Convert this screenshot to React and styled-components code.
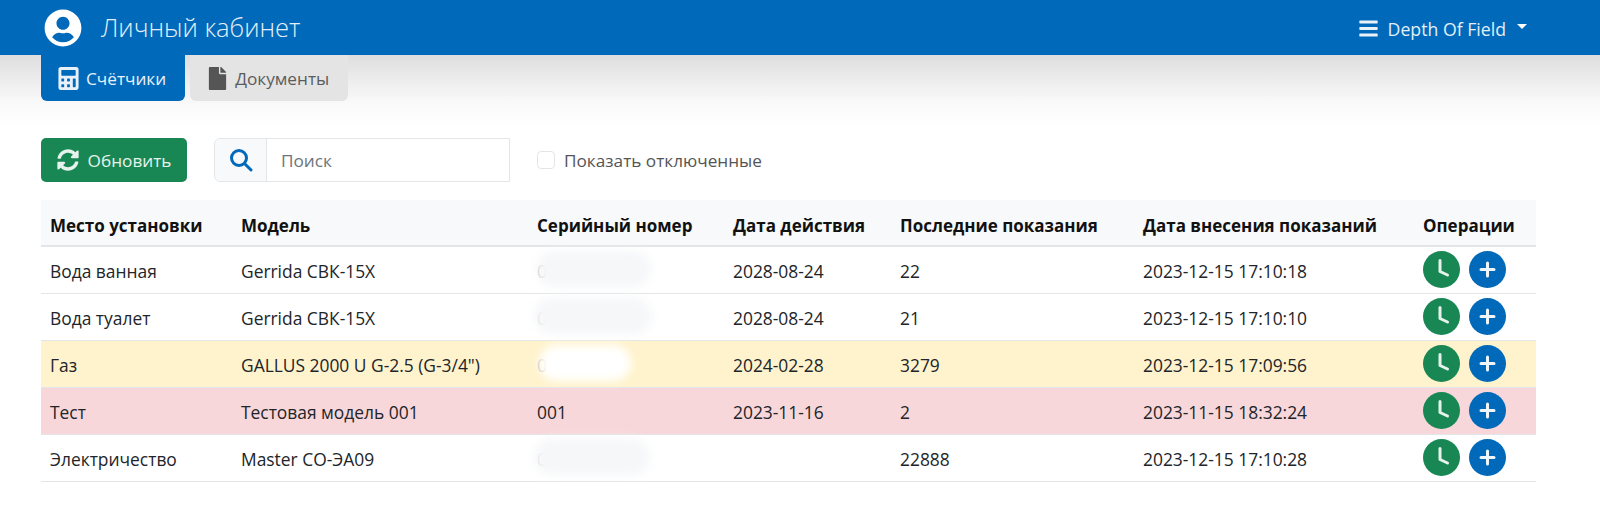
import React from "react";
import styled, { createGlobalStyle } from "styled-components";
import { FaCalculator, FaFile, FaSyncAlt, FaBars, FaUserCircle } from "react-icons/fa";

const GlobalStyle = createGlobalStyle`
	body {
		margin: 0;
		background: #fff;
		font-family: "Open Sans", "Noto Sans", sans-serif;
		font-size: 17.2px;
		color: #212529;
	}
`;

const Header = styled.header`
	height: 55px;
	background: #0069b9;
	display: flex;
	align-items: center;
	justify-content: space-between;
	padding: 0 73px 0 44px;
	color: #fff;
`;

const Brand = styled.div`
	display: flex;
	align-items: center;
	gap: 19px;
	font-size: 25.500px;
	font-weight: 300;
	color: #e3eff8;
`;

const BrandTitle = styled.span`
	margin-top: -2px;
`;

const UserMenu = styled.div`
	display: flex;
	align-items: center;
	padding-top: 2px;
	font-size: 17.700px;
	color: #e3eff8;
`;

const Caret = styled.span`
	width: 0;
	height: 0;
	margin-left: 11px;
	margin-top: -4px;
	border-left: 5px solid transparent;
	border-right: 5px solid transparent;
	border-top: 5px solid #fff;
`;

const Main = styled.main`
	padding: 0 64px 0 41px;
	height: 470px;
	background: linear-gradient(#dedede, #f8f8f8 45px, #ffffff 70px);
`;

const Tabs = styled.nav`
	display: flex;
	gap: 5px;
`;

const Tab = styled.div`
	height: 46px;
	padding: 0 19px 0 16px;
	display: flex;
	align-items: center;
	gap: 6px;
	border-radius: 0 0 6px 6px;
	background: ${({ $active }) => ($active ? "#0069b9" : "#e4e4e4")};
	color: ${({ $active }) => ($active ? "#e8f1f9" : "#5c5c5c")};
`;

const Toolbar = styled.div`
	display: flex;
	align-items: center;
	margin-top: 37px;
`;

const RefreshButton = styled.div`
	width: 146px;
	height: 44px;
	box-sizing: border-box;
	display: flex;
	align-items: center;
	justify-content: center;
	gap: 9px;
	background: #198754;
	color: #e6f3ec;
	border-radius: 5px;
`;

const SearchGroup = styled.div`
	display: flex;
	width: 296px;
	height: 44px;
	margin-left: 27px;
	box-sizing: border-box;
	border: 1px solid #e3e5e8;
	border-radius: 6px 0 0 6px;
`;

const SearchAddon = styled.div`
	width: 51px;
	display: flex;
	align-items: center;
	justify-content: center;
	background: #f8f9fa;
	border-right: 1px solid #e3e5e8;
	border-radius: 6px 0 0 6px;
`;

const SearchText = styled.div`
	padding-left: 14px;
	display: flex;
	align-items: center;
	color: #6c757d;
`;

const CheckLabel = styled.label`
	display: flex;
	align-items: center;
	gap: 9px;
	margin-left: 27px;
	color: #555;
`;

const CheckBox = styled.span`
	width: 18px;
	height: 18px;
	box-sizing: border-box;
	border: 1px solid #e3e5e8;
	border-radius: 4px;
	background: #fff;
`;

const Table = styled.table`
	width: 100%;
	margin-top: 18px;
	border-collapse: collapse;
	table-layout: fixed;
`;

const Th = styled.th`
	height: 46px;
	padding: 5px 9px 0;
	text-align: left;
	font-size: 17px;
	font-weight: 700;
	color: #111;
	background: #f8f9fa;
	border-bottom: 2px solid #e3e5e8;
	white-space: nowrap;
	box-sizing: border-box;
`;

const Row = styled.tr`
	background: ${({ $tone }) =>
		$tone === "warning" ? "#fff3cd" : $tone === "danger" ? "#f8d7da" : "#fff"};
`;

const Td = styled.td`
	height: 47px;
	box-sizing: border-box;
	padding: 3px 9px 0;
	font-size: 17.400px;
	border-bottom: 1px solid #e3e5e8;
	white-space: nowrap;
	color: #212529;
`;

const SerialCell = styled.div`
	position: relative;
	color: #bdbdbd;
`;

const Smudge = styled.span`
	position: absolute;
	left: ${({ $x }) => $x}px;
	top: -8px;
	width: ${({ $w }) => $w}px;
	height: 36px;
	border-radius: 18px;
	background: ${({ $tone }) => ($tone === "warning" ? "#ffffff" : "#f6f7f9")};
	filter: blur(5px);
`;

const Ops = styled.div`
	display: flex;
	gap: 9px;
	margin-top: -3px;
`;

const RoundButton = styled.span`
	width: 37px;
	height: 37px;
	border-radius: 50%;
	display: flex;
	align-items: center;
	justify-content: center;
	background: ${({ $color }) => $color};
`;

const rows = [
	{ place: "Вода ванная", model: "Gerrida СВК-15Х", smudge: [0, 114], date: "2028-08-24", value: "22", entered: "2023-12-15 17:10:18" },
	{ place: "Вода туалет", model: "Gerrida СВК-15Х", smudge: [-3, 118], date: "2028-08-24", value: "21", entered: "2023-12-15 17:10:10" },
	{ place: "Газ", model: 'GALLUS 2000 U G-2.5 (G-3/4")', smudge: [2, 92], date: "2024-02-28", value: "3279", entered: "2023-12-15 17:09:56", tone: "warning" },
	{ place: "Тест", model: "Тестовая модель 001", serial: "001", date: "2023-11-16", value: "2", entered: "2023-11-15 18:32:24", tone: "danger" },
	{ place: "Электричество", model: "Master СО-ЭА09", smudge: [-3, 116], date: "", value: "22888", entered: "2023-12-15 17:10:28" },
];

const columns = [
	["Место установки", 191],
	["Модель", 296],
	["Серийный номер", 196],
	["Дата действия", 167],
	["Последние показания", 243],
	["Дата внесения показаний", 280],
	["Операции", 122],
];

function SearchIcon() {
	return (
		<svg width="24" height="24" viewBox="0 0 24 24" fill="none" stroke="#0069b9" strokeWidth="3" strokeLinecap="round">
			<circle cx="10" cy="10" r="7.5" />
			<path d="M16 16l6 6" />
		</svg>
	);
}

function ClockHands() {
	return (
		<svg width="37" height="37" viewBox="0 0 37 37" fill="none" stroke="#e6f3ec" strokeWidth="3" strokeLinecap="round" strokeLinejoin="round">
			<path d="M17 9.500v11l7.500 3.500" />
		</svg>
	);
}

function PlusMark() {
	return (
		<svg width="37" height="37" viewBox="0 0 37 37" fill="none" stroke="#eef5fb" strokeWidth="3" strokeLinecap="round">
			<path d="M18.500 12v13M12 18.500h13" />
		</svg>
	);
}

export default function App() {
	return (
		<>
			<GlobalStyle />
			<Header>
				<Brand>
					<FaUserCircle size={38} color="#fff" />
					<BrandTitle>Личный кабинет</BrandTitle>
				</Brand>
				<UserMenu>
					<FaBars size={21} color="#e9f2f9" style={{ marginRight: 9 }} />
					Depth Of Field
					<Caret />
				</UserMenu>
			</Header>
			<Main>
				<Tabs>
					<Tab $active>
						<FaCalculator size={23} />
						Счётчики
					</Tab>
					<Tab>
						<FaFile size={23} color="#555" />
						Документы
					</Tab>
				</Tabs>
				<Toolbar>
					<RefreshButton>
						<FaSyncAlt size={22} />
						Обновить
					</RefreshButton>
					<SearchGroup>
						<SearchAddon>
							<SearchIcon />
						</SearchAddon>
						<SearchText>Поиск</SearchText>
					</SearchGroup>
					<CheckLabel>
						<CheckBox />
						Показать отключенные
					</CheckLabel>
				</Toolbar>
				<Table>
					<colgroup>
						{columns.map(([title, width]) => (
							<col key={title} width={width} />
						))}
					</colgroup>
					<thead>
						<tr>
							{columns.map(([title]) => (
								<Th key={title}>{title}</Th>
							))}
						</tr>
					</thead>
					<tbody>
						{rows.map(row => (
							<Row key={row.place} $tone={row.tone}>
								<Td>{row.place}</Td>
								<Td>{row.model}</Td>
								<Td>
									{row.serial || (
										<SerialCell>
											0
											<Smudge $x={row.smudge[0]} $w={row.smudge[1]} $tone={row.tone} />
										</SerialCell>
									)}
								</Td>
								<Td>{row.date}</Td>
								<Td>{row.value}</Td>
								<Td>{row.entered}</Td>
								<Td>
									<Ops>
										<RoundButton $color="#198754">
											<ClockHands />
										</RoundButton>
										<RoundButton $color="#0069b9">
											<PlusMark />
										</RoundButton>
									</Ops>
								</Td>
							</Row>
						))}
					</tbody>
				</Table>
			</Main>
		</>
	);
}
